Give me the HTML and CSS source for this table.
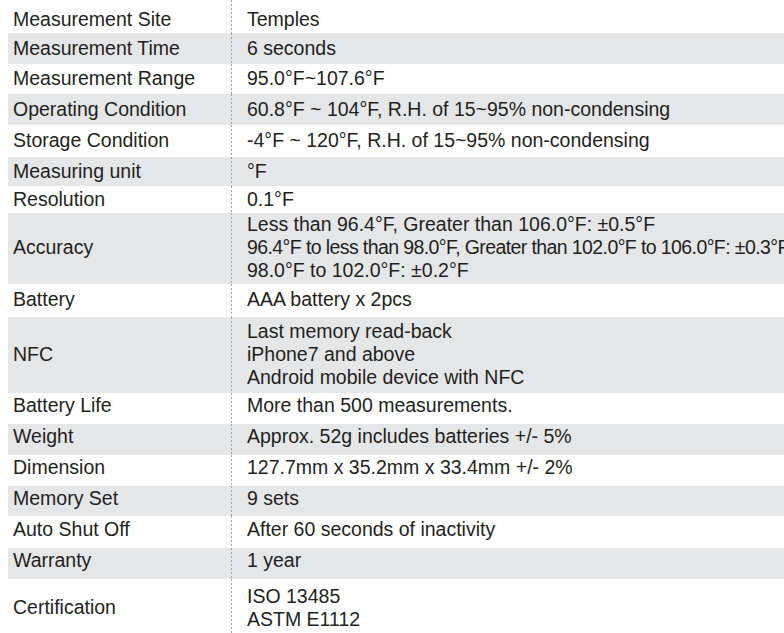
FILE: index.html
```html
<!DOCTYPE html>
<html>
<head>
<meta charset="utf-8">
<link rel="stylesheet" href="styles.css">
</head>
<body>
<table class="spec">
<tr class="first"><td class="k">Measurement Site</td><td class="v">Temples</td></tr>
<tr><td class="k">Measurement Time</td><td class="v">6 seconds</td></tr>
<tr><td class="k">Measurement Range</td><td class="v">95.0°F~107.6°F</td></tr>
<tr><td class="k">Operating Condition</td><td class="v">60.8°F ~ 104°F, R.H. of 15~95% non-condensing</td></tr>
<tr><td class="k">Storage Condition</td><td class="v">-4°F ~ 120°F, R.H. of 15~95% non-condensing</td></tr>
<tr><td class="k">Measuring unit</td><td class="v">°F</td></tr>
<tr class="res"><td class="k">Resolution</td><td class="v">0.1°F</td></tr>
<tr class="multi"><td class="k">Accuracy</td><td class="v">Less than 96.4°F, Greater than 106.0°F: ±0.5°F<br><span class="tight">96.4°F to less than 98.0°F, Greater than 102.0°F to 106.0°F: ±0.3°F</span><br>98.0°F to 102.0°F: ±0.2°F</td></tr>
<tr class="mid"><td class="k">Battery</td><td class="v">AAA battery x 2pcs</td></tr>
<tr class="multi"><td class="k">NFC</td><td class="v">Last memory read-back<br>iPhone7 and above<br>Android mobile device with NFC</td></tr>
<tr class="lo"><td class="k">Battery Life</td><td class="v">More than 500 measurements.</td></tr>
<tr class="lo"><td class="k">Weight</td><td class="v">Approx. 52g includes batteries +/- 5%</td></tr>
<tr class="lo"><td class="k">Dimension</td><td class="v">127.7mm x 35.2mm x 33.4mm +/- 2%</td></tr>
<tr class="lo"><td class="k">Memory Set</td><td class="v">9 sets</td></tr>
<tr class="lo"><td class="k">Auto Shut Off</td><td class="v">After 60 seconds of inactivity</td></tr>
<tr class="lo"><td class="k">Warranty</td><td class="v">1 year</td></tr>
<tr><td class="k">Certification</td><td class="v">ISO 13485<br>ASTM E1112</td></tr>
</table>
</body>
</html>
```
FILE: styles.css
```css
html, body {
  margin: 0;
  padding: 0;
  background: #ffffff;
  overflow: hidden;
  width: 784px;
  height: 633px;
}
.spec {
  margin-left: 8px;
  border-collapse: collapse;
  border-spacing: 0;
  width: 900px;
  font-family: "Liberation Sans", Arial, sans-serif;
  font-size: 19.5px;
  line-height: 23px;
  color: #231f20;
  white-space: nowrap;
}
.spec td {
  padding: 0 0 1px 0;
  vertical-align: middle;
}
.spec tr:nth-child(even) td {
  background-color: #e5e6e8;
}
.spec .k {
  width: 218px;
  padding-left: 5px;
}
.spec .v {
  padding-left: 16px;
  background-image: repeating-linear-gradient(to bottom, #a0a0a0 0 2px, transparent 2px 4px);
  background-size: 1px 100%;
  background-repeat: no-repeat;
  background-position: 0 0;
}
.spec .first td {
  padding-top: 6px;
  padding-bottom: 0;
}
.spec .res td { padding-bottom: 0; }
.spec .mid td { padding-bottom: 3px; }
.spec .lo td { padding-bottom: 6px; }
.spec .multi td { padding-bottom: 2px; }
.tight {
  letter-spacing: -0.6px;
}
.spec tr { height: 31px; }
.spec tr:nth-child(1) { height: 33px; }
.spec tr:nth-child(3) { height: 30px; }
.spec tr:nth-child(5) { height: 32px; }
.spec tr:nth-child(6) { height: 29px; }
.spec tr:nth-child(7) { height: 27px; }
.spec tr:nth-child(8) { height: 71px; }
.spec tr:nth-child(9) { height: 33px; }
.spec tr:nth-child(10) { height: 76px; }
.spec tr:nth-child(14) { height: 30px; }
.spec tr:nth-child(15) { height: 32px; }
.spec tr:nth-child(17) { height: 58px; }
```
